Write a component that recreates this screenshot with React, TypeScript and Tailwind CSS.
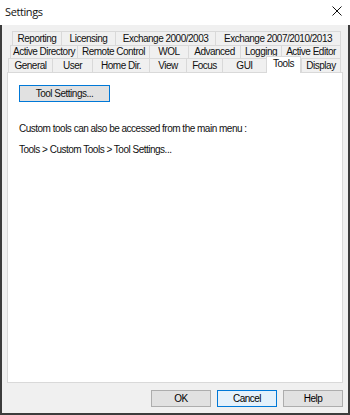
import React from 'react';

type Tab = { label: string; w: string; active?: boolean };

const rows: { ml: string; h: string; tabs: Tab[] }[] = [
  {
    ml: 'ml-[5px]',
    h: 'h-[14px]',
    tabs: [
      { label: 'Reporting', w: 'w-[49px]' },
      { label: 'Licensing', w: 'w-[54px]' },
      { label: 'Exchange 2000/2003', w: 'w-[100px]' },
      { label: 'Exchange 2007/2010/2013', w: 'w-[126px]' }
    ]
  },
  {
    ml: 'ml-[3px]',
    h: 'h-[13px]',
    tabs: [
      { label: 'Active Directory', w: 'w-[67px]' },
      { label: 'Remote Control', w: 'w-[72px]' },
      { label: 'WOL', w: 'w-[39px]' },
      { label: 'Advanced', w: 'w-[52px]' },
      { label: 'Logging', w: 'w-[41px]' },
      { label: 'Active Editor', w: 'w-[60px]' }
    ]
  },
  {
    ml: 'ml-[1px]',
    h: 'h-[14px]',
    tabs: [
      { label: 'General', w: 'w-[44px]' },
      { label: 'User', w: 'w-[40px]' },
      { label: 'Home Dir.', w: 'w-[57px]' },
      { label: 'View', w: 'w-[37px]' },
      { label: 'Focus', w: 'w-[36px]' },
      { label: 'GUI', w: 'w-[44px]' },
      { label: 'Tools', w: 'w-[35px]', active: true },
      { label: 'Display', w: 'w-[40px]' }
    ]
  }
];

const DialogButton = ({ label, focused }: { label: string; focused?: boolean }) => (
  <button
    className={
      focused
        ? 'w-[60px] h-[17px] border border-[#0078d7] bg-[#e5f1fb] text-[10px] leading-none text-black'
        : 'w-[60px] h-[17px] border border-[#adadad] bg-[#e1e1e1] text-[10px] leading-none text-black'
    }
  >
    {label}
  </button>
);

export default function App() {
  return (
    <div className="w-[350px] h-[415px] flex flex-col bg-[#f0f0f0] text-[#111] font-['Liberation_Sans',Arial,sans-serif] tracking-[-0.5px]">
      <div className="h-[25px] shrink-0 bg-white flex items-center justify-between pl-[5px] pr-[8px]">
        <span className="text-[11px] font-['Open_Sans',sans-serif] tracking-[-0.4px]">Settings</span>
        <svg width="10" height="10" viewBox="0 0 10 10" className="-mt-[4px]">
          <path d="M0.5 0.5 L9.5 9.5 M9.5 0.5 L0.5 9.5" stroke="#111" strokeWidth="1" fill="none" />
        </svg>
      </div>

      <div className="flex-1 flex flex-col border-x-2 border-b-2 border-[#3c3c3c] px-[5px] pt-[6px]">
        {rows.map((row, i) => (
          <div key={i} className={`flex ${row.ml} ${row.h}`}>
            {row.tabs.map((t, j) =>
              t.active ? (
                <div
                  key={t.label}
                  className={`${t.w} h-[17px] -mt-[2px] relative z-10 bg-white border-x border-t border-[#d9d9d9] flex justify-center pt-[1px] text-[10px] leading-[12px]`}
                >
                  {t.label}
                </div>
              ) : (
                <div
                  key={t.label}
                  className={`${t.w} border-t border-l border-[#d9d9d9] ${j === row.tabs.length - 1 ? 'border-r' : ''} flex items-center justify-center text-[10px] leading-none whitespace-nowrap`}
                >
                  {t.label}
                </div>
              )
            )}
          </div>
        ))}

        <div className="h-[311px] bg-white border border-[#d9d9d9] px-[11px] pt-[12px] text-[10px]">
          <button className="w-[91px] h-[17px] border border-[#0078d7] bg-[#e1e1e1] text-[10px] leading-none">
            Tool Settings...
          </button>
          <p className="mt-[21px] leading-[12px]">Custom tools can also be accessed from the main menu :</p>
          <p className="mt-[9px] leading-[12px]">Tools &gt; Custom Tools &gt; Tool Settings...</p>
        </div>

        <div className="flex justify-end gap-[6px] mt-[7px]">
          <DialogButton label="OK" />
          <DialogButton label="Cancel" focused />
          <DialogButton label="Help" />
        </div>
      </div>
    </div>
  );
}
